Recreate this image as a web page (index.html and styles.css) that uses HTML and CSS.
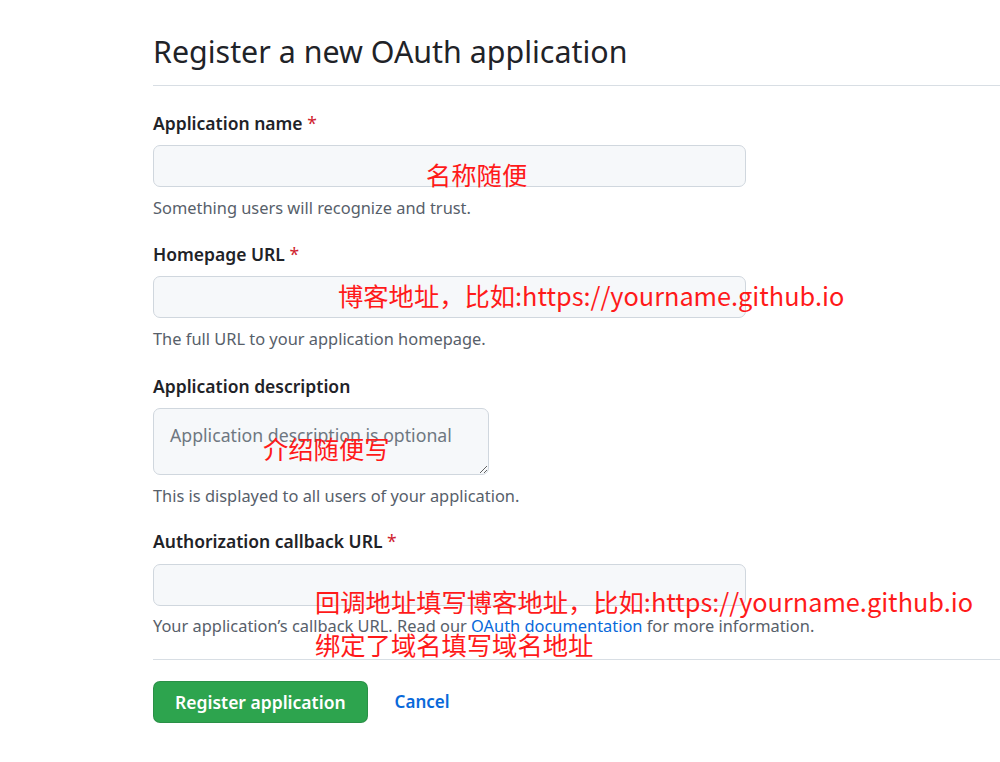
FILE: index.html
```html
<!DOCTYPE html>
<html lang="en">
<head>
<meta charset="utf-8">
<title>Register a new OAuth application</title>
<link rel="stylesheet" href="styles.css">
</head>
<body>
<div class="page">
  <h1 class="title">Register a new OAuth application</h1>
  <form class="form">
    <div class="field">
      <label class="label">Application name <span class="req">*</span></label>
      <input class="input" type="text">
      <p class="note">Something users will recognize and trust.</p>
    </div>
    <div class="field">
      <label class="label">Homepage URL <span class="req">*</span></label>
      <input class="input" type="text">
      <p class="note">The full URL to your application homepage.</p>
    </div>
    <div class="field">
      <label class="label">Application description</label>
      <textarea class="textarea" placeholder="Application description is optional"></textarea>
      <p class="note">This is displayed to all users of your application.</p>
    </div>
    <div class="field field-last">
      <label class="label">Authorization callback URL <span class="req">*</span></label>
      <input class="input" type="text">
      <p class="note">Your application’s callback URL. Read our <a class="link" href="#">OAuth documentation</a> for more information.</p>
    </div>
    <div class="actions">
      <button class="btn" type="button">Register application</button>
      <a class="cancel" href="#">Cancel</a>
    </div>
  </form>
  <span class="anno a1">名称随便</span>
  <span class="anno a2">博客地址，比如:https://yourname.github.io</span>
  <span class="anno a3">介绍随便写</span>
  <span class="anno a4">回调地址填写博客地址，比如:https://yourname.github.io</span>
  <span class="anno a5">绑定了域名填写域名地址</span>
</div>
</body>
</html>
```
FILE: styles.css
```css
html, body {
  margin: 0;
  padding: 0;
  background: #ffffff;
}
body {
  font-family: "Noto Sans", "Open Sans", "Liberation Sans", sans-serif;
  color: #1f2328;
}
.page {
  position: relative;
  padding-left: 153px;
  height: 762px;
  overflow: hidden;
}
.title {
  margin: 33px 0 0 0;
  padding-bottom: 14px;
  font-size: 30.4px;
  line-height: 37.5px;
  font-weight: 400;
  border-bottom: 1px solid #d8dee4;
}
.form {
  padding-top: 24px;
}
.field {
  display: flex;
  flex-direction: column;
  align-items: flex-start;
  margin-bottom: 22px;
}
.field-last {
  margin-top: -1px;
  margin-bottom: 21px;
}
.label {
  font-size: 17.5px;
  line-height: 26px;
  font-weight: 600;
  margin-bottom: 9px;
}
.field-last .label {
  margin-bottom: 10px;
}
.req {
  color: #cf222e;
  font-weight: 400;
}
.input {
  box-sizing: border-box;
  width: 593px;
  height: 42px;
  background: #f6f8fa;
  border: 1px solid #d0d7de;
  border-radius: 7px;
  margin: 0;
}
.textarea {
  box-sizing: border-box;
  width: 336px;
  height: 67px;
  background: #f6f8fa;
  border: 1px solid #d0d7de;
  border-radius: 7px;
  margin: 0;
  padding: 16px 16px;
  font-family: inherit;
  font-size: 17.7px;
  line-height: 1.2;
  resize: vertical;
}
.textarea::placeholder {
  color: #6e7781;
}
.note {
  margin: 10px 0 0 0;
  font-size: 16.4px;
  line-height: 22.5px;
  color: #57606a;
}
.field-last .note {
  margin-top: 9px;
}
.link {
  color: #0969da;
  text-decoration: none;
}
.actions {
  display: flex;
  align-items: center;
  border-top: 1px solid #d8dee4;
  padding-top: 21px;
}
.btn {
  height: 42px;
  padding: 0 21px;
  background: #2da44e;
  color: #ffffff;
  border: 1px solid rgba(27, 31, 36, 0.15);
  border-radius: 7px;
  font-family: inherit;
  font-size: 17.5px;
  font-weight: 600;
}
.cancel {
  margin-left: 27px;
  color: #0969da;
  font-size: 17px;
  font-weight: 600;
  text-decoration: none;
}
.anno {
  position: absolute;
  font-family: "Noto Sans CJK SC", sans-serif;
  font-size: 25.3px;
  line-height: 30px;
  color: #ff1a1a;
  white-space: nowrap;
}
.a1 { left: 426px; top: 159px; }
.a2 { left: 338px; top: 280px; }
.a3 { left: 263px; top: 433px; }
.a4 { left: 315px; top: 586px; }
.a5 { left: 315px; top: 629px; }
```
